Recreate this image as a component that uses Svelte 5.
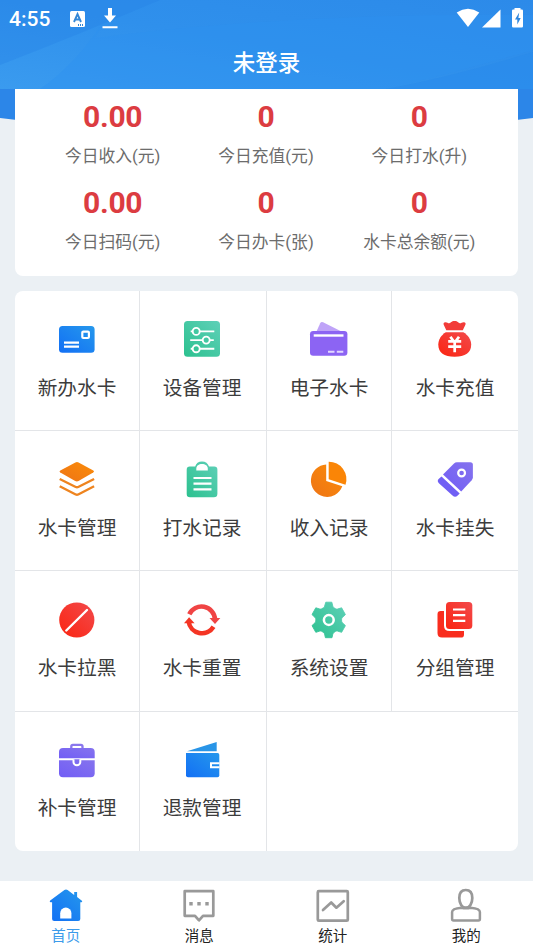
<script>
  const stats = [
    ['0.00', '今日收入(元)'],
    ['0', '今日充值(元)'],
    ['0', '今日打水(升)'],
    ['0.00', '今日扫码(元)'],
    ['0', '今日办卡(张)'],
    ['0', '水卡总余额(元)'],
  ];
  const actions = [
    ['card', '新办水卡'],
    ['sliders', '设备管理'],
    ['wallet', '电子水卡'],
    ['bag', '水卡充值'],
    ['layers', '水卡管理'],
    ['clipboard', '打水记录'],
    ['pie', '收入记录'],
    ['tag', '水卡挂失'],
    ['ban', '水卡拉黑'],
    ['refresh', '水卡重置'],
    ['gear', '系统设置'],
    ['group', '分组管理'],
    ['briefcase', '补卡管理'],
    ['refund', '退款管理'],
  ];
  const tabs = [
    ['home', '首页'],
    ['message', '消息'],
    ['chart', '统计'],
    ['me', '我的'],
  ];
</script>

<svg class="defs" width="0" height="0" aria-hidden="true">
  <defs>
    <linearGradient id="blue" x1="0" y1="1" x2="1" y2="0"><stop offset="0" stop-color="#126ff5" /><stop offset="1" stop-color="#2598ec" /></linearGradient>
    <linearGradient id="green" x1="0" y1="1" x2="1" y2="0"><stop offset="0" stop-color="#2cc18f" /><stop offset="1" stop-color="#5fd0b8" /></linearGradient>
    <linearGradient id="red" x1="0" y1="1" x2="1" y2="0"><stop offset="0" stop-color="#fb2410" /><stop offset="1" stop-color="#f24a4c" /></linearGradient>
    <linearGradient id="orange" x1="0" y1="1" x2="1" y2="0"><stop offset="0" stop-color="#ee7416" /><stop offset="1" stop-color="#fb8c08" /></linearGradient>
    <linearGradient id="purple" x1="0" y1="1" x2="1" y2="0"><stop offset="0" stop-color="#715df5" /><stop offset="1" stop-color="#8573ee" /></linearGradient>
  </defs>
</svg>

{#snippet icon(name)}
  <svg class="icon" viewBox="0 0 36 36" fill="none">
    {#if name === 'card'}
      <rect y="5" width="35.6" height="26.7" rx="3.5" fill="url(#blue)" />
      <rect x="23.3" y="10.6" width="6.6" height="6.4" rx="1" stroke="#fff" stroke-width="2.2" />
      <path d="M5 21.6h15M5 25.7h15" stroke="#fff" stroke-width="2.2" />
    {:else if name === 'sliders'}
      <rect width="36" height="35.8" rx="3.6" fill="url(#green)" />
      <g stroke="#fff" stroke-width="1.9">
        <path d="M6.7 10.4h23.6M6.2 19.1h23.6M6.7 27.8h23.6" />
        <circle cx="12.2" cy="10.4" r="3.5" fill="#43c8a2" />
        <circle cx="22.2" cy="19.1" r="3.5" fill="#43c8a2" />
        <circle cx="12.2" cy="27.8" r="3.5" fill="#39c598" />
      </g>
    {:else if name === 'wallet'}
      <path d="M4.8 12 9.2 2.2Q10.1.4 12.1 1.2L31.5 11v2H4.8Z" fill="#bfa3f8" />
      <rect x="-1" y="10" width="37.4" height="24.8" rx="3.2" fill="#8c64f3" />
      <path d="M2.7 14.5h29.8" stroke="#fff" stroke-width="2.4" />
      <path d="M17 30.7h6.5M25.8 30.7h6.5" stroke="#e2d7ff" stroke-width="2" />
    {:else if name === 'bag'}
      <path d="M9.3 9.3 6.7 3.7Q6 1.4 8.3 1.2c2-.1 2.5 1.1 4 1.1S14.2.1 17.6.1s3.7 2.2 5.2 2.2 2.2-1.2 4.1-1.1q2.3.2 1.5 2.5l-2.6 5.6Z" fill="#f23b38" />
      <path d="M8.8 11.3h17.6c4.5 2.7 7.8 7.5 7.8 12.3 0 8.3-6 12.2-16.6 12.2S1.3 31.9 1.3 23.6c0-4.8 3-9.6 7.5-12.3Z" fill="url(#red)" />
      <path d="m13.4 15.7 3.3 4.7M22 15.7l-3.3 4.7M11.2 20.4h13M11.2 25.6h13M17.7 20.4v10.8" stroke="#fff" stroke-width="2.7" />
    {:else if name === 'layers'}
      <path d="M1.3 9.4 16.4 1.5q1.6-.8 3.2 0l14.7 7.9q1.6 1-.1 2L19.5 20q-1.6.9-3.3 0L1.3 11.4q-1.6-1 0-2Z" fill="url(#orange)" />
      <path d="m.7 18 16 8q1.3.6 2.5 0l15.9-8M.7 25.2l16 8.3q1.3.6 2.5 0l15.9-8.3" stroke="#ee841f" stroke-width="2.4" />
    {:else if name === 'clipboard'}
      <path d="M6 5.5h5.2C12 2.2 14.5.4 18 .4s6 1.8 7 5.1h5.2a3.2 3.2 0 0 1 3.2 3.2v24a3.5 3.5 0 0 1-3.5 3.5H6a3.3 3.3 0 0 1-3.3-3.3V8.7A3.2 3.2 0 0 1 6 5.5Z" fill="url(#green)" />
      <path d="M12.3 9.4V7.6c0-2.900 2.500-4.600 5.700-4.600s5.800 1.700 5.800 4.600v1.800Z" fill="#fff" />
      <path d="M9.5 17h18M9.5 22.7h18M9.5 28.4h18" stroke="#fff" stroke-width="2.2" />
    {:else if name === 'pie'}
      <path d="M15.2 3.5V20L31.3 25.3A16.2 16.2 0 1 1 15.2 3.5Z" fill="url(#orange)" />
      <path d="M17.7.7A17.5 17.5 0 0 1 34.5 23.8L17.7 18.3Z" fill="#fa8506" />
    {:else if name === 'tag'}
      <path d="m6 13.5 11-11q1.2-1.2 3-1.2h13.3q2.6 0 2.6 2.5v12.5q0 1.700-1.200 3L24.200 30.500Z" fill="url(#purple)" />
      <path d="m4.500 15.500 18.200 17-2 2q-2.600 2.500-5.200 0L1.900 22.300q-2.300-2.400 0-4.500Z" fill="#705ff4" />
      <circle cx="24.6" cy="12" r="3.4" stroke="#fff" stroke-width="2.2" />
    {:else if name === 'ban'}
      <circle cx="17.8" cy="19" r="17.6" fill="url(#red)" />
      <path d="M7.3 29.5 28 9" stroke="#fff" stroke-width="2.4" stroke-linecap="round" />
    {:else if name === 'refresh'}
      <path d="M5.3 13.3A13.5 13.5 0 0 1 31 18.3" stroke="#f04444" stroke-width="4.6" />
      <path d="M25.5 17h10.8l-5.3 6Z" fill="#f04444" />
      <path d="M29.5 25.7A13.5 13.5 0 0 1 4.6 20.5" stroke="#f43524" stroke-width="4.6" />
      <path d="M0 22.3h10.6L5.1 16.3Z" fill="#f43524" />
    {:else if name === 'gear'}
      <path d="M14.8 1.2h6l1 4q.2 1 1.2 1.6l1.7 1q.9.5 1.9.2l4-1.2 3.8 6.8-3 2.8q-.8.7-.8 1.8v1.8q0 1.1.8 1.8l3 2.8-3.8 6.700-4-1.200q-1-.3-1.900.2L23 31.400q-1 .6-1.200 1.600l-.8 3.700h-6.600l-.8-3.700q-.2-1-1.200-1.600l-1.700-1.100q-.9-.5-1.900-.2l-4 1.200L1 24.600l3-2.800q.8-.7.800-1.800v-1.800q0-1.100-.8-1.800l-3-2.800 3.800-6.800 4 1.200q1 .3 1.900-.2l1.700-1q1-.6 1.200-1.600Z" fill="url(#green)" stroke="url(#green)" stroke-width=".9" stroke-linejoin="round" />
      <circle cx="17.8" cy="19" r="4.9" stroke="#fff" stroke-width="2.5" />
    {:else if name === 'group'}
      <path d="M3.7 10H7v14.500Q7 30 12.500 30H27v3.400a3.200 3.200 0 0 1-3.200 3.200H5q-4.500 0-4.500-4.500V13.200A3.200 3.200 0 0 1 3.700 10Z" fill="#f92d1e" />
      <rect x="9" y="1" width="26.3" height="27" rx="3.5" fill="url(#red)" />
      <path d="M16 8.5h12.3M16 14.2h12.3M16 19.9h12.3" stroke="#fff" stroke-width="2.2" />
    {:else if name === 'briefcase'}
      <path d="M12.3 8V5.500q0-1.600 1.600-1.600h8q1.600 0 1.600 1.600V8" stroke="#8a77ed" stroke-width="2.3" />
      <path d="M4 7h27.700a4 4 0 0 1 4 4v6.200H0V11a4 4 0 0 1 4-4Z" fill="url(#purple)" />
      <path d="M0 19.200h35.700v13a4 4 0 0 1-4 4H4a4 4 0 0 1-4-4Z" fill="url(#purple)" />
      <path d="M14.500 18.300v2.600a3.400 3.400 0 0 0 6.800 0v-2.600" fill="#7e6cf0" stroke="#fff" stroke-width="2" />
    {:else if name === 'refund'}
      <path d="M3 10.200 32.700 1.100V10.200Z" fill="#2995e7" />
      <path d="M2 12h31.500q1.800 0 1.800 1.800v20.600q0 1.800-1.800 1.800H4q-2 0-2-2Z" fill="url(#blue)" />
      <path d="M35.500 22.300H27v4h8.500" stroke="#fff" stroke-width="2" />
    {/if}
  </svg>
{/snippet}

{#snippet tabIcon(name)}
  <svg class="tab-icon" viewBox="0 0 36 36" fill="none" stroke="#999" stroke-width="2.7" stroke-linejoin="round">
    {#if name === 'home'}
      <g stroke="none">
        <path d="M16.4 2.9q1.6-1 3.2 0l6.6 5V5.1h2.9v5l4.8 3.600q.9 1.200-.4 1.500h-1.200v16.700q0 2.100-2.100 2.100H6.200q-2.100 0-2.100-2.100V15.200H2.500q-1.500-.5-.3-1.700Z" fill="url(#blue)" />
        <path d="M12.2 31.500v-5.300a5.600 5.600 0 0 1 11.200 0v5.300Z" fill="#fff" />
      </g>
    {:else if name === 'message'}
      <path d="M3.700 4.200h28.600v24.600H22L18 33.300 14 28.800H3.700Z" />
      <path d="M8.300 16.700h3.400M16.300 16.700h3.400M24.300 16.700h3.400" stroke-width="3.400" />
    {:else if name === 'chart'}
      <rect x="2.8" y="4.2" width="30" height="29.5" rx="1" />
      <path d="m8 23 8.200-7.500 5.200 5.200 7.300-6.500" stroke-linecap="round" />
    {:else}
      <path d="M17.800 3c-4.400 0-6.500 3.300-6.500 8 0 5.500 2.700 9.700 6.500 9.700s6.500-4.200 6.500-9.700c0-4.700-2.100-8-6.500-8Z" />
      <path d="M13.500 20.700c-4.200.3-9.400 1.300-9.400 4.300v7q0 1.500 1.500 1.500h24.800q1.500 0 1.500-1.500v-7c0-3-5.200-4-9.400-4.300q-4.500 1.300-9 0" stroke-width="2.500" />
    {/if}
  </svg>
{/snippet}

<div class="screen">
  <header>
    <svg class="backdrop" viewBox="0 0 533 89" preserveAspectRatio="none">
      <defs>
        <linearGradient id="sky" x1="0" y1="1" x2="1" y2="0"><stop offset="0" stop-color="#3a9bef" /><stop offset=".5" stop-color="#2f90ec" /><stop offset="1" stop-color="#2c8ae9" /></linearGradient>
      </defs>
      <path fill="url(#sky)" d="M0 0h533v89H0Z" />
      <path d="M0 0h160Q75 36 0 65Z" fill="#2480e4" opacity=".35" />
      <path d="M105 20Q75 65 40 89H386Q455 72 533 50V15Q300 12 95 38Z" fill="#2d91f0" opacity=".4" />
      <path d="M533 52Q455 76 386 89h147Z" fill="#278aec" opacity=".5" />
    </svg>
    <div class="status">
      <span class="time">4:55</span>
      <svg class="lang" viewBox="0 0 15 16"><rect width="15" height="16" rx="1.5" fill="#fff" /><path d="M4 11 7.5 3 11 11M5.2 8.500h4.600" fill="none" stroke="#3487d6" stroke-width="1.9" /><path d="M8 14h1m1 0h1m1 0h1" stroke="#3487d6" stroke-width="2" /></svg>
      <svg class="download" viewBox="0 0 16 21"><path d="M6 0h4v7.500h4L8 14.500 2 7.500h4ZM.5 18.200h15v2H.5Z" fill="#fff" /></svg>
      <svg class="signals" viewBox="0 0 68 21">
        <path d="M.7 4.500Q12 -2.800 23.300 4.500L12 19Z" fill="#fff" />
        <path d="M44.500 1.500V19.500H26Z" fill="#fff" />
        <path d="M58.500 1.500V0h6v1.500h1.300q1.200 0 1.200 1.200v15.600q0 1.200-1.200 1.200h-8.600q-1.200 0-1.200-1.200V2.700q0-1.200 1.200-1.200Z" fill="#fff" />
        <path d="m63.200 4.500-4.200 7h2.300v5l3.400-6.500h-2.300Z" fill="#2f86dc" />
      </svg>
    </div>
    <h1>未登录</h1>
  </header>

  <main>
    <svg class="curve" viewBox="0 0 533 34" preserveAspectRatio="none"><path d="M0 0h533v29Q266 62 0 29Z" fill="#2c86e8" /></svg>
    <section class="stats">
      {#each stats as [value, label]}
        <div class="stat"><strong>{value}</strong><span>{label}</span></div>
      {/each}
    </section>
    <section class="actions">
      {#each actions as [name, label], i}
        <div class="action" class:second-col={i % 4 === 1} class:last-col={i % 4 === 3} class:last-row={i >= 12}>
          {@render icon(name)}
          <span>{label}</span>
        </div>
      {/each}
    </section>
  </main>

  <nav>
    {#each tabs as [name, label], i}
      <div class="tab" class:active={i === 0}>
        {@render tabIcon(name)}
        <span>{label}</span>
      </div>
    {/each}
  </nav>
</div>

<style>
  :global(body) { margin: 0; }
  .defs { position: absolute; }
  .screen {
    width: 533px;
    height: 949px;
    display: flex;
    flex-direction: column;
    overflow: hidden;
    background: #ebf0f4;
    font-family: Roboto, "Noto Sans CJK SC", sans-serif;
  }
  header {
    position: relative;
    flex: none;
    height: 89px;
    color: #fff;
  }
  .backdrop { position: absolute; inset: 0; width: 533px; height: 89px; }
  .status {
    position: relative;
    display: flex;
    align-items: center;
    height: 37px;
    padding: 0 9px;
  }
  .time { width: 61px; font-size: 21px; font-weight: 500; line-height: 38px; }
  .lang { width: 15px; height: 16px; }
  .download { width: 16px; height: 21px; margin-left: 17px; }
  .signals { width: 68px; height: 21px; margin-left: auto; }
  h1 {
    position: relative;
    margin: 0;
    font-size: 22.5px;
    font-weight: 500;
    line-height: 52px;
    text-align: center;
  }
  main { position: relative; flex: 1; padding: 0 15px; }
  .curve { position: absolute; left: 0; top: 0; width: 533px; height: 34px; }
  .stats {
    position: relative;
    box-sizing: border-box;
    height: 187px;
    padding: 9px 22px 0 21px;
    display: grid;
    grid-template-columns: repeat(3, 1fr);
    grid-auto-rows: 86px;
    background: #fff;
    border-radius: 0 0 8px 8px;
  }
  .stat { display: flex; flex-direction: column; align-items: center; }
  .stat strong { font-size: 30px; line-height: 38px; font-weight: 700; letter-spacing: -0.3px; color: #dc3c41; }
  .stat span { font-size: 16.8px; line-height: 40px; color: #6c6c6c; white-space: nowrap; }
  .actions {
    margin-top: 15px;
    height: 560px;
    display: grid;
    grid-template-columns: 125px 127px 125px 126px;
    grid-template-rows: 140px 140px 141px 139px;
    background: #fff;
    border-radius: 8px;
  }
  .action {
    box-sizing: border-box;
    display: flex;
    flex-direction: column;
    align-items: center;
    padding-top: 30px;
    border-right: 1px solid #e3e5e8;
    border-bottom: 1px solid #e3e5e8;
  }
  .second-col { padding-right: 2px; }
  .last-col { border-right: 0; }
  .last-row { padding-top: 29px; border-bottom: 0; }
  .icon { flex: none; width: 36px; height: 36px; overflow: visible; }
  .action span { margin-top: 17px; font-size: 19.7px; line-height: 30px; color: #3c3c3c; }
  nav {
    flex: none;
    display: flex;
    height: 68px;
    margin-left: -1px;
    background: #fff;
  }
  .tab { flex: 1; display: flex; flex-direction: column; align-items: center; padding-top: 6px; color: #222; }
  .tab-icon { flex: none; width: 36px; height: 36px; }
  .tab span { flex: none; font-size: 14.5px; line-height: 28px; }
  .active { color: #3c9bea; }
</style>
